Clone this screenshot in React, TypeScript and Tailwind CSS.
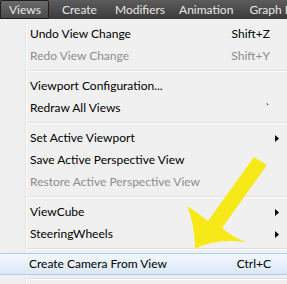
import React from "react";

interface ItemProps {
  label: string;
  shortcut?: string;
  disabled?: boolean;
  submenu?: boolean;
  active?: boolean;
}

const MenuRow: React.FC<ItemProps> = ({ label, shortcut, disabled, submenu, active }) => {
  return (
    <div
      className={`flex items-center h-[22px] ${
        active ? "-mx-[2px] border border-[#aeccf1] rounded-[3px] bg-gradient-to-b from-[#f2f8ff] to-[#dce8f8]" : ""
      }`}
    >
      {/* gutter */}
      <div className={`h-full shrink-0 ${active ? "w-[26px]" : "w-[26px] border-r border-[#e2e3e3]"}`}></div>
      <div className={`h-full shrink-0 w-[1px] ${active ? "" : "bg-white"}`}></div>
      <span className={`flex-1 pl-[3px] ${disabled ? "text-[#8d8d8d]" : "text-black"}`}>{label}</span>
      <span className={`text-right ${disabled ? "text-[#8d8d8d]" : "text-black"}`}>{shortcut}</span>
      <div className="w-[17px] shrink-0 flex items-center justify-end pr-[8px]">
        {submenu && (
          <svg width="4" height="7" viewBox="0 0 4 7">
            <path d="M0 0 L4 3.5 L0 7 Z" fill="#000" />
          </svg>
        )}
      </div>
    </div>
  );
};

const Separator: React.FC = () => (
  <div className="flex h-[8px]">
    <div className="w-[26px] h-full border-r border-[#e2e3e3] shrink-0"></div>
    <div className="w-[1px] h-full bg-white shrink-0"></div>
    <div className="flex-1 flex flex-col justify-center">
      <div className="h-[1px] bg-[#e0e0e0]"></div>
      <div className="h-[1px] bg-white"></div>
    </div>
  </div>
);

const App: React.FC = () => {
  return (
    <div className="relative w-[287px] h-[284px] overflow-hidden bg-[#f0f0f0] font-['Lato',sans-serif] text-[12px] leading-none">
      {/* Menu bar */}
      <div className="flex items-center h-[19px] bg-gradient-to-b from-[#5c5c5c] to-[#3b3b3b] text-[#e6e6e6] text-[12px] whitespace-nowrap">
        <div className="h-full w-[49px] shrink-0 flex items-center pl-[8px] border border-[#1e1e1e] rounded-[2px] bg-gradient-to-b from-[#6a6a6a] to-[#4a4a4a]">
          Views
        </div>
        <span className="ml-[13px]">Create</span>
        <span className="ml-[18px]">Modifiers</span>
        <span className="ml-[14px]">Animation</span>
        <span className="ml-[16px]">Graph Editors</span>
      </div>

      {/* Dropdown */}
      <div className="pt-[4px]">
        <MenuRow label="Undo View Change" shortcut="Shift+Z" />
        <MenuRow label="Redo View Change" shortcut="Shift+Y" disabled />
        <Separator />
        <MenuRow label="Viewport Configuration..." />
        <MenuRow label="Redraw All Views" shortcut="`" />
        <Separator />
        <MenuRow label="Set Active Viewport" submenu />
        <MenuRow label="Save Active Perspective View" />
        <MenuRow label="Restore Active Perspective View" disabled />
        <Separator />
        <MenuRow label="ViewCube" submenu />
        <MenuRow label="SteeringWheels" submenu />
        <Separator />
        <MenuRow label="Create Camera From View" shortcut="Ctrl+C" active />
        <Separator />
      </div>

      {/* Yellow annotation arrow */}
      <svg className="absolute left-0 top-0 pointer-events-none" width="287" height="284" viewBox="0 0 287 284">
        <path
          d="M254 157 L267 165 L222 228 Q232 237 246 242 Q215 238 195 249 Q195 225 187 206 Q198 213 208 221 Z"
          fill="#f7e817"
        />
      </svg>
    </div>
  );
};

export default App;
